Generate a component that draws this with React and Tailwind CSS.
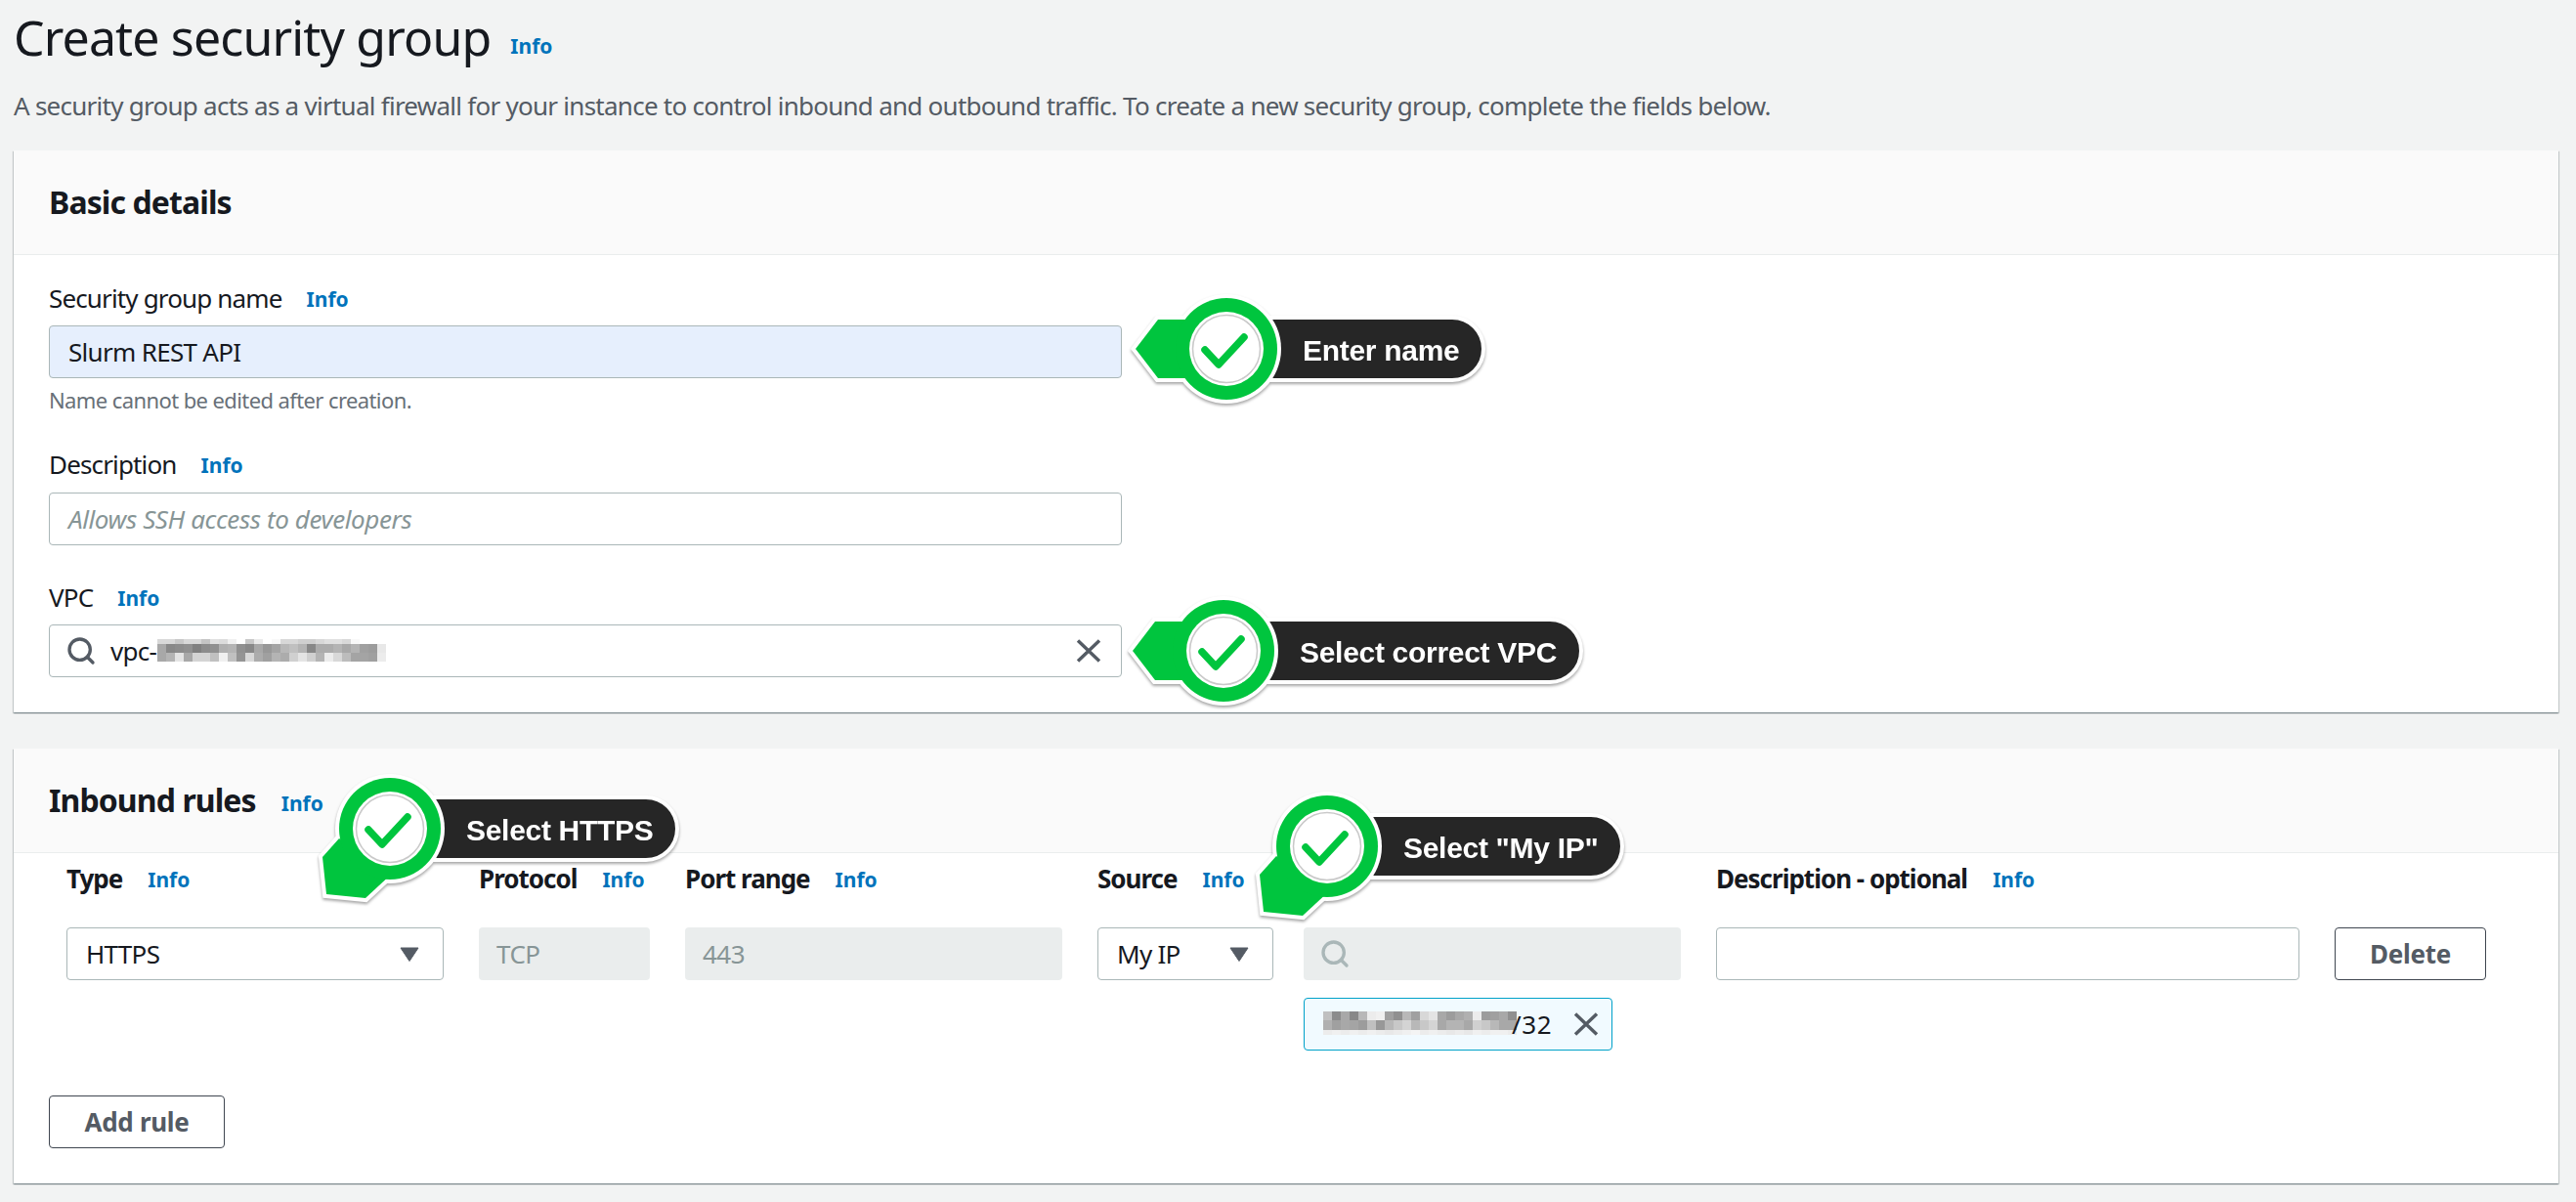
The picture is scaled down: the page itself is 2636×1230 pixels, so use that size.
import React from "react";
import { Search } from "lucide-react";

const vpcRows = [
  ["d8","d8","c8","d8","d8","c4","e0","dc","f0","ff","c8","ea","ff","f8","d8","d8","cf","cf","d8","e0","e0","d8","f8","ff","ff","ff"],
  ["a8","88","8c","90","80","8c","90","b0","b4","90","88","a8","98","a4","b8","c0","b4","88","ac","ac","b4","a8","b4","a0","9c","e8"],
  ["a8","b4","e4","a8","d4","d4","c0","f0","c0","94","d8","ac","a0","b4","ac","d0","e4","d0","b4","ec","d8","bc","a4","a4","a0","ec"],
];
const tokenRows = [
  ["c0","8c","a8","88","b8","ec","f0","a0","90","b8","a0","d8","e4","a8","9c","a8","b0","ec","9c","a0","a8","90"],
  ["b0","a0","a8","a4","9c","c0","98","b8","c8","d4","b8","c8","d4","a8","b4","b4","a8","d0","c8","b8","a8","a8"],
  ["ec","f0","ec","f0","ec","f0","ec","e8","ec","f0","f4","ec","f0","ec","e8","ec","e8","f0","ec","f0","f0","ec"],
];

function Mosaic({ rows, heights, className }) {
  let y = 0;
  const total = heights.reduce((a, b) => a + b, 0);
  const w = rows[0].length * 9;
  return (
    <svg width={w} height={total} viewBox={`0 0 ${w} ${total}`} className={className} shapeRendering="crispEdges">
      {rows.map((row, r) => {
        const top = y;
        y += heights[r];
        return row.map((c, i) => (
          <rect key={`${r}-${i}`} x={i * 9} y={top} width="9" height={heights[r]} fill={`#${c}${c}${c}`} />
        ));
      })}
    </svg>
  );
}

function Info({ className = "" }) {
  return <a className={`font-bold text-[21px] leading-none text-[#0073bb] ${className}`}>Info</a>;
}

function Caret() {
  return (
    <svg width="20" height="15" viewBox="0 0 20 15" className="shrink-0">
      <path d="M1 1 H19 L10 14.5 Z" fill="#545b64" stroke="#545b64" strokeLinejoin="round" />
    </svg>
  );
}

function Cross() {
  return (
    <svg width="26" height="24" viewBox="0 0 26 24" className="shrink-0">
      <path d="M2 1.5 L24 22.5 M24 1.5 L2 22.5" stroke="#545b64" strokeWidth="3.4" fill="none" />
    </svg>
  );
}

const leftPin = "-93,0 -70,-30 -30,-30 -30,30 -70,30";
const downPin = "-52,10 -69,29 -65,67 -25,71 2,46";

function Callout({ pos, pin, label }) {
  return (
    <div className={`absolute z-10 drop-shadow-[0_2px_1.5px_rgba(0,0,0,0.35)] ${pos}`}>
      <div className="ml-[110px] mt-[36px] h-[68px] w-fit rounded-full border-4 border-white bg-[#262626] pl-[74px] pr-[23px] pt-[2px] flex items-center text-white font-bold text-[30px] tracking-[-0.3px] whitespace-nowrap font-['Liberation_Sans',Arial,sans-serif]">
        {label}
      </div>
      <svg width="200" height="160" viewBox="-110 -70 200 160" className="absolute left-0 top-0">
        <polygon points={pin} fill="#fff" stroke="#fff" strokeWidth="8" />
        <circle r="56" fill="#fff" />
        <polygon points={pin} fill="#00c53e" />
        <circle r="52" fill="#00c53e" />
        <circle r="38" fill="#fff" />
        <circle r="34.5" fill="none" stroke="#c9c9c9" strokeWidth="1.5" />
        <polyline points="-22,1 -8,16 18,-12" fill="none" stroke="#00c53e" strokeWidth="7.5" strokeLinecap="round" strokeLinejoin="round" />
      </svg>
    </div>
  );
}

function Label({ children }) {
  return (
    <div className="h-[36px] pb-[3px] flex items-center text-[26px] text-[#16191f] tracking-[-0.85px]">
      <span>{children}</span>
      <Info className="ml-[25px] mt-[2px] tracking-normal" />
    </div>
  );
}

function ColHead({ children }) {
  return (
    <div className="h-[36px] pb-[3px] flex items-center gap-[26px] whitespace-nowrap">
      <span className="font-bold text-[26px] text-[#16191f] tracking-[-1px]">{children}</span>
      <Info className="mt-[2px]" />
    </div>
  );
}

const box = "h-[54px] rounded-[4px] border border-[#aab7b8] flex items-center text-[26px] tracking-[-0.7px]";
const off = "h-[54px] rounded-[4px] bg-[#eaeded] flex items-center text-[26px] text-[#879596] tracking-[-0.5px]";
const cardCls = "bg-white shadow-[0_1px_1px_0_rgba(0,28,36,0.3),1px_1px_1px_0_rgba(0,28,36,0.15),-1px_1px_1px_0_rgba(0,28,36,0.15)]";
const btn = "h-[54px] rounded-[4px] border border-[#3f4650] bg-white flex items-center justify-center font-bold text-[26px] text-[#545b64] tracking-[-0.3px]";

export default function App() {
  return (
    <div className="relative h-[1230px] overflow-hidden bg-[#f2f3f3] pl-[14px] pr-[18px] text-[#16191f] font-['Noto_Sans',Arial,sans-serif]">
      <div className="h-[76px] flex items-center">
        <h1 className="text-[50px] font-normal leading-none tracking-[-0.85px]">Create security group</h1>
        <Info className="ml-[20px] mt-[18px]" />
      </div>
      <p className="h-[64px] flex items-center text-[26px] text-[#545b64] tracking-[-0.74px] mb-[14px]">
        A security group acts as a virtual firewall for your instance to control inbound and outbound traffic. To create a new security group, complete the fields below.
      </p>

      <section className={cardCls}>
        <div className="h-[107px] bg-[#fafafa] border-b border-[#eaeded] pl-[36px] flex items-center">
          <h2 className="text-[32px] font-bold tracking-[-0.9px]">Basic details</h2>
        </div>
        <div className="pl-[36px] pt-[28px] pb-[36px]">
          <div className="w-[1098px]">
            <Label>Security group name</Label>
            <div className={`${box} mt-[8px] bg-[#e6effd] pl-[19px]`}>Slurm REST API</div>
            <div className="mt-[8px] h-[28px] flex items-center text-[22px] text-[#687078] tracking-[-0.6px]">Name cannot be edited after creation.</div>

            <div className="mt-[36px]"><Label>Description</Label></div>
            <div className={`${box} mt-[9px] bg-white pl-[19px] italic text-[#879596] !tracking-[-0.4px]`}>Allows SSH access to developers</div>

            <div className="mt-[37px]"><Label>VPC</Label></div>
            <div className={`${box} mt-[8px] bg-white pl-[16px] pr-[20px]`}>
              <Search size={32} strokeWidth={2.5} color="#545b64" className="shrink-0" />
              <span className="ml-[14px]">vpc-</span>
              <Mosaic rows={vpcRows} heights={[5, 9, 9]} className="ml-[1px] mt-[-2px]" />
              <span className="ml-auto"><Cross /></span>
            </div>
          </div>
        </div>
      </section>

      <section className={`${cardCls} mt-[37px]`}>
        <div className="h-[107px] bg-[#fafafa] border-b border-[#eaeded] pl-[36px] flex items-center">
          <h2 className="text-[32px] font-bold tracking-[-0.9px]">Inbound rules</h2>
          <Info className="ml-[26px] mt-[6px]" />
        </div>
        <div className="pl-[36px] pt-[10px] pb-[36px]">
          <div className="pl-[18px] grid grid-cols-[386px_175px_386px_597px_597px_155px] gap-x-[36px] text-[#16191f]">
            <ColHead>Type</ColHead>
            <ColHead>Protocol</ColHead>
            <ColHead>Port range</ColHead>
            <ColHead>Source</ColHead>
            <ColHead>Description - optional</ColHead>
            <div />

            <div className={`${box} mt-[30px] bg-white pl-[19px] pr-[24px] justify-between`}>HTTPS<Caret /></div>
            <div className={`${off} mt-[30px] pl-[18px]`}>TCP</div>
            <div className={`${off} mt-[30px] pl-[18px]`}>443</div>
            <div className="mt-[30px]">
              <div className="flex gap-[31px]">
                <div className={`${box} w-[180px] bg-white pl-[19px] pr-[24px] justify-between`}>My IP<Caret /></div>
                <div className={`${off} w-[386px] pl-[16px]`}>
                  <Search size={32} strokeWidth={2.5} color="#aab7b8" />
                </div>
              </div>
              <div className="ml-[211px] mt-[18px] w-[316px] h-[54px] rounded-[4px] border border-[#00a1c9] bg-[#f1faff] flex items-center pl-[19px] pr-[13px] text-[26px] tracking-[0.6px]">
                <Mosaic rows={tokenRows} heights={[9, 10, 5]} className="-mt-[2px] -mr-[5px]" />
                <span>/32</span>
                <span className="ml-auto"><Cross /></span>
              </div>
            </div>
            <div className={`${box} mt-[30px] bg-white`} />
            <div className={`${btn} mt-[30px]`}>Delete</div>
          </div>
          <div className={`${btn} mt-[46px] w-[180px]`}>Add rule</div>
        </div>
      </section>

      <Callout pos="left-[1145px] top-[287px]" pin={leftPin} label="Enter name" />
      <Callout pos="left-[1142px] top-[596px]" pin={leftPin} label="Select correct VPC" />
      <Callout pos="left-[289px] top-[778px]" pin={downPin} label="Select HTTPS" />
      <Callout pos="left-[1248px] top-[796px]" pin={downPin} label={'Select "My IP"'} />
    </div>
  );
}
